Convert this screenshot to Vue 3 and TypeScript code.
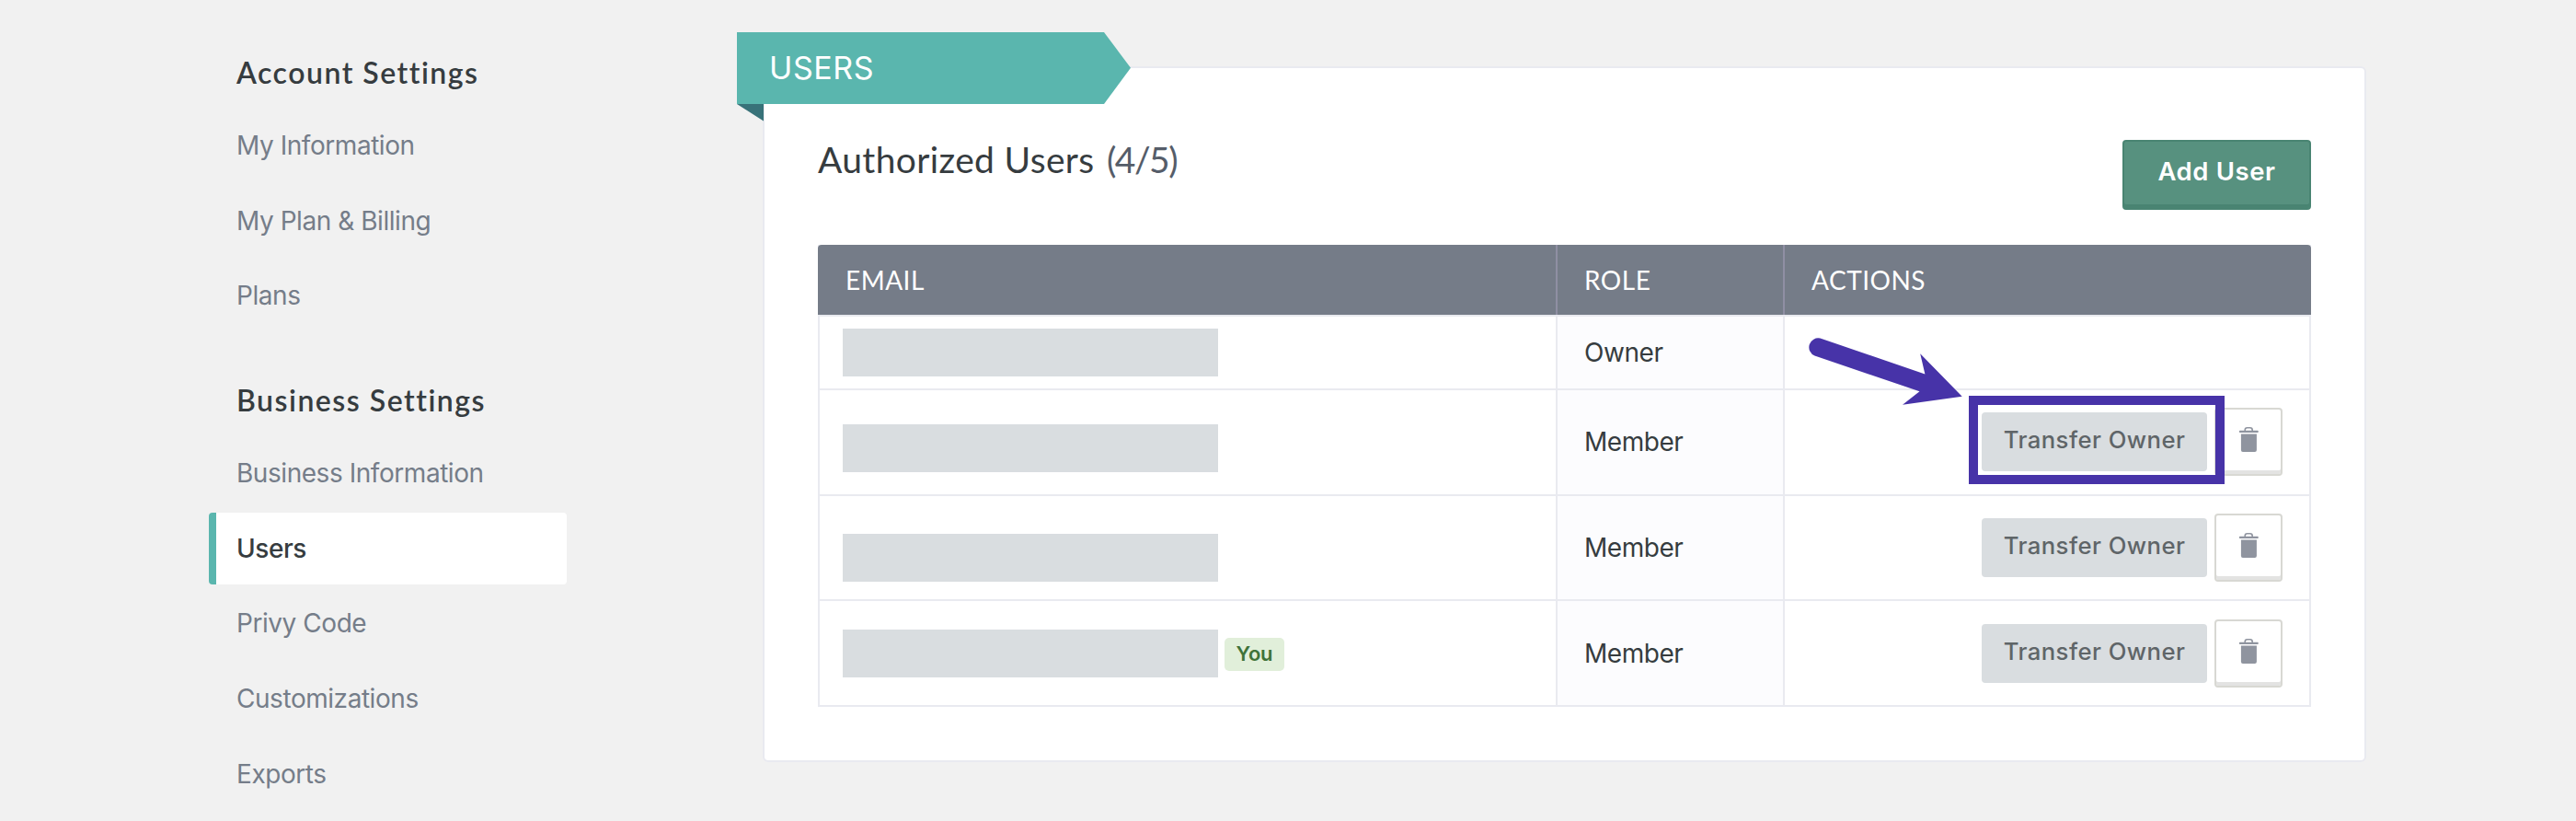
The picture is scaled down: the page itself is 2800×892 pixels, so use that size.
<script setup lang="ts">
interface NavItem {
  label: string
  active?: boolean
}
interface NavSection {
  title: string
  items: NavItem[]
}
interface UserRow {
  id: number
  role: 'Owner' | 'Member'
  mask: 'mask-a' | 'mask-b' | 'mask-c' | 'mask-d'
  you?: boolean
  highlighted?: boolean
}

const sections: NavSection[] = [
  {
    title: 'Account Settings',
    items: [{ label: 'My Information' }, { label: 'My Plan & Billing' }, { label: 'Plans' }],
  },
  {
    title: 'Business Settings',
    items: [
      { label: 'Business Information' },
      { label: 'Users', active: true },
      { label: 'Privy Code' },
      { label: 'Customizations' },
      { label: 'Exports' },
    ],
  },
]

const users: UserRow[] = [
  { id: 1, role: 'Owner', mask: 'mask-a' },
  { id: 2, role: 'Member', mask: 'mask-b', highlighted: true },
  { id: 3, role: 'Member', mask: 'mask-c' },
  { id: 4, role: 'Member', mask: 'mask-d', you: true },
]
</script>

<template>
  <div class="page">
    <aside class="sidebar">
      <section v-for="section in sections" :key="section.title" class="nav-section">
        <h2 class="nav-title">{{ section.title }}</h2>
        <nav class="nav-list">
          <a
            v-for="item in section.items"
            :key="item.label"
            class="nav-item"
            :class="{ active: item.active }"
          >{{ item.label }}</a>
        </nav>
      </section>
    </aside>

    <main class="panel">
      <div class="ribbon">
        <svg class="ribbon-shape" width="428" height="97" viewBox="0 0 428 97" aria-hidden="true">
          <path d="M0 78H29V96.5Z" fill="#387279" />
          <path d="M0 0H399L428 38.8L399 78H0Z" fill="#5ab6ae" />
        </svg>
        <span class="ribbon-text">USERS</span>
      </div>

      <header class="panel-head">
        <h1 class="title">Authorized Users <span class="count">(4/5)</span></h1>
        <button class="add-user" type="button">Add User</button>
      </header>

      <div class="table">
        <div class="row head">
          <div class="cell th">EMAIL</div>
          <div class="cell th">ROLE</div>
          <div class="cell th">ACTIONS</div>
        </div>
        <div v-for="user in users" :key="user.id" class="row" :class="{ short: user.role === 'Owner' }">
          <div class="cell email">
            <span class="mask" :class="user.mask"></span>
            <span v-if="user.you" class="badge">You</span>
          </div>
          <div class="cell role">{{ user.role }}</div>
          <div class="cell actions">
            <template v-if="user.role !== 'Owner'">
              <button class="transfer" type="button">
                Transfer Owner
              </button>
              <button class="trash" type="button" aria-label="Remove user">
                <svg width="22" height="28" viewBox="0 0 22 28">
                  <path d="M7.2 4.4V3.2Q7.2 0.8 9.6 0.8H12.8Q15.2 0.8 15.2 3.2V4.4" fill="none" stroke="#8f949f" stroke-width="1.6" />
                  <rect x="0.8" y="3.8" width="21" height="2.1" rx="1" fill="#8f949f" />
                  <path d="M2.9 7.6H19.9V25Q19.9 27 17.9 27H4.9Q2.9 27 2.9 25Z" fill="#8f949f" />
                </svg>
              </button>
              <span v-if="user.highlighted" class="highlight"></span>
              <svg v-if="user.highlighted" class="arrow" width="172" height="78" viewBox="1963 364 172 78" aria-hidden="true">
                <path
                  d="M1978.5 367.6L2092.4 406.5L2087.2 384.3L2132.7 430.7L2068 439.7L2086.5 425.3L1972.5 386.6A10 10 0 0 1 1978.5 367.6Z"
                  fill="#4733a8"
                />
              </svg>
            </template>
          </div>
        </div>
      </div>
    </main>
  </div>
</template>

<style>
html,
body {
  margin: 0;
  background: #f1f1f1;
  overflow: hidden;
}
</style>

<style scoped>
* {
  box-sizing: border-box;
}
.page {
  display: flex;
  align-items: flex-start;
  width: 2800px;
  height: 892px;
  padding-left: 227px;
  overflow: hidden;
  background: #f1f1f1;
  color: #363c3f;
  font-family: Inter, 'Liberation Sans', sans-serif;
  font-size: 28px;
  letter-spacing: -0.45px;
}
.sidebar {
  flex: none;
  width: 389px;
  padding-top: 59px;
}
.nav-section {
  margin-bottom: 55px;
}
.nav-title {
  margin: 0 0 20px;
  padding-left: 30px;
  font-family: Lato, 'Open Sans', sans-serif;
  font-weight: 600;
  font-size: 32px;
  line-height: 40px;
  letter-spacing: 1.5px;
  white-space: nowrap;
}
.nav-list {
  display: flex;
  flex-direction: column;
  gap: 3.6px;
}
.nav-item {
  height: 78px;
  padding-left: 22px;
  border-left: 8px solid transparent;
  border-radius: 4px;
  line-height: 79px;
  color: #757d89;
  white-space: nowrap;
}
.nav-item.active {
  background: #fff;
  border-left-color: #5ab6ae;
  color: #363c3f;
  font-weight: 500;
}
.panel {
  position: relative;
  flex: none;
  width: 1743px;
  height: 756px;
  margin: 72px 0 0 213px;
  padding: 77px 58px 58px;
  border: 2px solid #e9eaf0;
  border-radius: 6px;
  background: #fff;
}
.ribbon {
  position: absolute;
  left: -30px;
  top: -39px;
  width: 428px;
  height: 78px;
}
.ribbon-shape {
  position: absolute;
  left: 0;
  top: 0;
}
.ribbon-text {
  position: relative;
  display: block;
  padding-left: 35px;
  color: #fff;
  font-size: 34px;
  line-height: 77px;
  letter-spacing: 0.6px;
}
.panel-head {
  display: flex;
  justify-content: space-between;
  align-items: flex-start;
  height: 115px;
}
.title {
  margin: 0;
  font-family: Lato, 'Open Sans', sans-serif;
  font-weight: 400;
  font-size: 39px;
  line-height: 45px;
  letter-spacing: 0.35px;
  white-space: nowrap;
}
.count {
  margin-left: 3px;
  color: #555d69;
  letter-spacing: -1.5px;
}
.add-user {
  width: 205px;
  height: 76px;
  margin-top: 1px;
  padding: 0 0 6px;
  border: 2px solid #498472;
  border-radius: 4px;
  background: #57917f;
  box-shadow: inset 0 -4px 0 #498472;
  color: #fff;
  font: 600 27.5px/1 Inter, sans-serif;
  letter-spacing: 0.6px;
}
.table {
  width: 1623px;
  border: 2px solid #e9eaf0;
  border-top: 0;
  border-bottom: 0;
}
.row {
  display: grid;
  grid-template-columns: 800px 247px 572px;
  height: 114.7px;
  border-bottom: 2px solid #e9eaf0;
}
.row.short {
  height: 80px;
}
.row.head {
  height: 78px;
  margin: 0 -2px;
  padding: 0 2px;
  border-radius: 4px 4px 0 0;
  background: #757c88 padding-box;
}
.cell {
  display: flex;
  align-items: center;
  padding-left: 28px;
}
.cell + .cell {
  padding-left: 29px;
  border-left: 2px solid #e9eaf0;
}
.cell.th {
  font-family: Lato, 'Open Sans', sans-serif;
  letter-spacing: 0.5px;
  color: #fff;
}
.cell.th + .cell.th {
  border-left-color: #8f8fa3;
}
.cell.email {
  padding-left: 25px;
}
.role {
  background: #fcfcfe;
}
.mask {
  width: 408px;
  height: 52.5px;
  background: #d9dde0;
}
.mask-b {
  margin-top: 13px;
}
.mask-c {
  margin-top: 22px;
}
.mask-d {
  margin-top: 1px;
}
.badge {
  width: 65px;
  height: 36px;
  margin: 3px 0 0 7px;
  border-radius: 5px;
  background: #e1efda;
  color: #3f7339;
  font-weight: 600;
  font-size: 22px;
  line-height: 34px;
  text-align: center;
  letter-spacing: -0.2px;
}
.actions {
  position: relative;
  justify-content: flex-end;
  gap: 8px;
  padding-right: 29px;
}
.transfer {
  width: 245px;
  height: 64px;
  padding: 0 0 4px;
  border: 0;
  border-radius: 4px;
  background: #d9dde0;
  color: #5f6568;
  font: 500 25.7px/1 Inter, sans-serif;
  letter-spacing: 0.45px;
  white-space: nowrap;
}
.trash {
  display: flex;
  align-items: center;
  justify-content: center;
  width: 74px;
  height: 74px;
  padding: 0 0 4px;
  border: 2px solid #d8d8d3;
  border-radius: 4px;
  background: #fff;
  box-shadow: inset 0 -4px 0 #e3e3e2;
}
.highlight {
  position: absolute;
  left: 200px;
  top: 6px;
  width: 278px;
  height: 96px;
  border: 10px solid #4733a8;
}
.arrow {
  position: absolute;
  left: 23px;
  top: -60px;
}
</style>
